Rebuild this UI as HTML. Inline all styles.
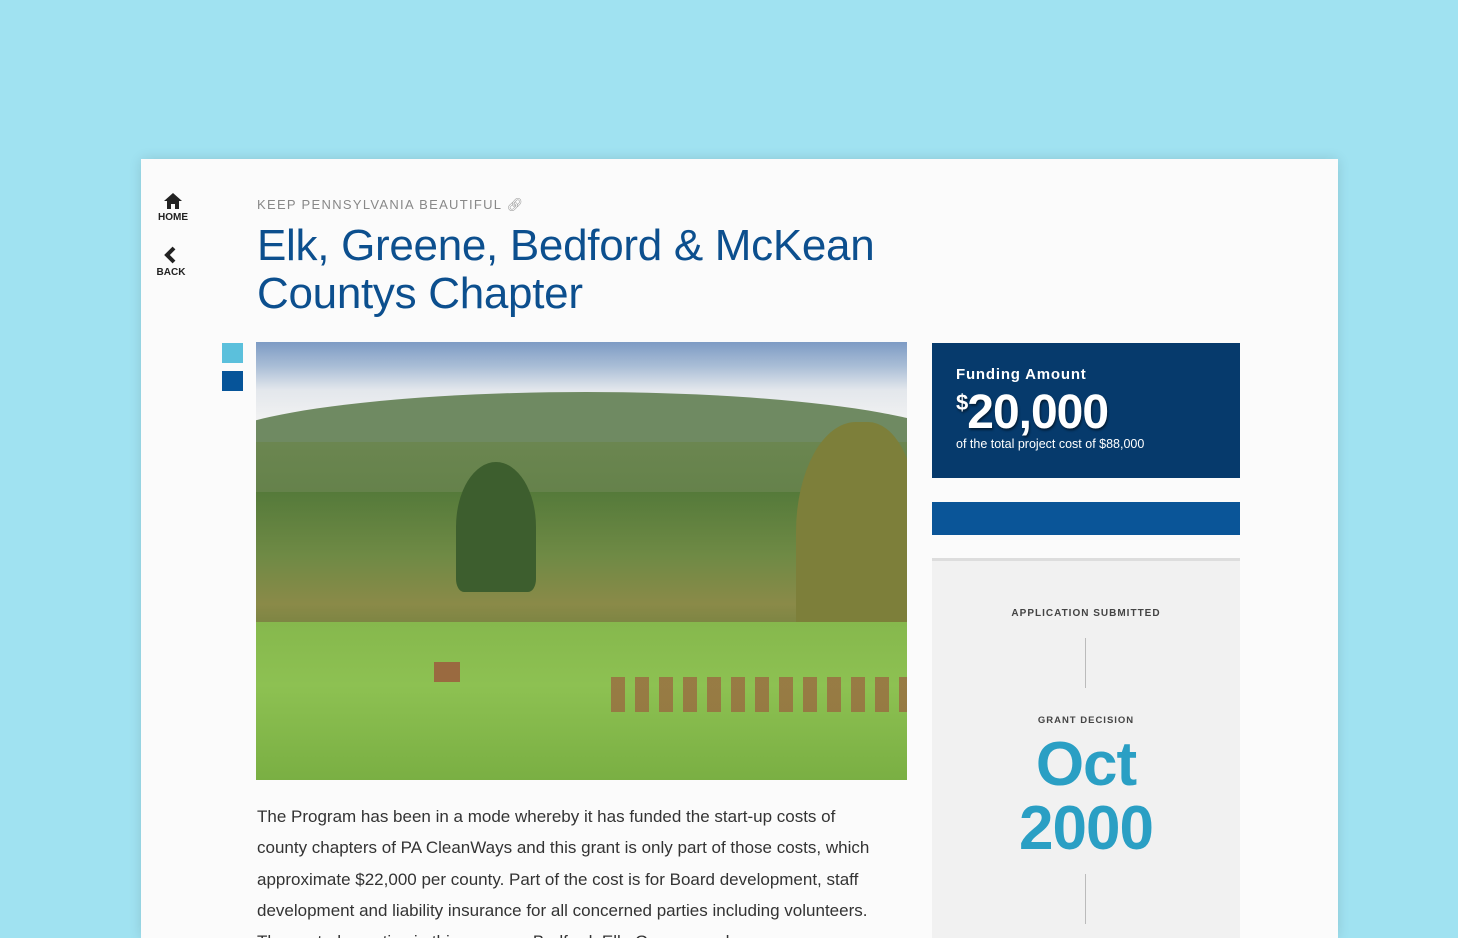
<!DOCTYPE html>
<html style="overflow:hidden"><head><style>
html,body{height:938px}
body{margin:0;width:1458px;height:938px;background:#a0e2f1;overflow:hidden;font-family:"Liberation Sans",sans-serif;position:relative}
.card{position:absolute;left:141px;top:159px;width:1197px;height:779px;background:#fbfbfb;box-shadow:0 0 12px rgba(0,0,0,.12)}
.nav{position:absolute;font-size:10px;font-weight:bold;color:#222;text-align:center;width:40px}
.kicker{position:absolute;left:257px;top:197px;font-size:13px;letter-spacing:1.3px;color:#888}
h1{position:absolute;left:257px;top:222px;margin:0;font-weight:normal;font-size:44px;line-height:48px;color:#0c4f8e;letter-spacing:-.3px}
.sq{position:absolute;left:222px;width:21px;height:20px}
.photo{position:absolute;left:256px;top:342px;width:651px;height:438px;overflow:hidden;background:#7fae45}
.body{position:absolute;left:257px;top:801px;width:625px;font-size:17px;line-height:31.3px;color:#333;height:137px;overflow:hidden}
.fund{position:absolute;left:932px;top:343px;width:308px;height:135px;background:#063a6c;color:#fff}
.bar{position:absolute;left:932px;top:502px;width:308px;height:33px;background:#0a5598}
.tl{position:absolute;left:932px;top:558px;width:308px;height:380px;background:#f1f1f1;border-top:3px solid #ddd;text-align:center;overflow:hidden}
.small{font-size:10px;letter-spacing:1px;color:#444;font-weight:bold}
.vl{position:absolute;left:153px;width:1px;background:#bbb}
</style></head><body>
<div class="card"></div>
<div class="nav" style="left:153px;top:191px"><svg width="20" height="20" viewBox="0 0 20 18"><path d="M10 1 L19 9 H16 V17 H12 V12 H8 V17 H4 V9 H1Z" fill="#222"/></svg><div style="margin-top:-2px">HOME</div></div>
<div class="nav" style="left:151px;top:246px"><svg width="16" height="18" viewBox="0 0 16 18"><path d="M11 2 L4 9 L11 16" stroke="#222" stroke-width="4" fill="none"/></svg><div style="margin-top:0px">BACK</div></div>
<div class="kicker">KEEP PENNSYLVANIA BEAUTIFUL <span style="color:#999">&#128279;&#xFE0E;</span></div>
<h1>Elk, Greene, Bedford &amp; McKean<br>Countys Chapter</h1>
<div class="sq" style="top:343px;background:#5bc0dc"></div>
<div class="sq" style="top:371px;background:#065499"></div>
<div class="photo">
<div style="position:absolute;left:0;top:0;width:651px;height:80px;background:linear-gradient(180deg,#7d9bc4,#a9bdd6 30%,#e3e7ec 60%,#f2f2f2)"></div>
<div style="position:absolute;left:-50px;top:50px;width:760px;height:160px;background:#6f8a62;border-radius:50% 50% 0 0/35% 35% 0 0"></div>
<div style="position:absolute;left:0;top:100px;width:651px;height:110px;background:linear-gradient(180deg,#6b8650,#5e7d45)"></div>
<div style="position:absolute;left:0;top:150px;width:651px;height:160px;background:linear-gradient(180deg,#557a3a,#6f8a45 40%,#8a8a48 70%,#6a7e3c)"></div>
<div style="position:absolute;left:200px;top:120px;width:80px;height:130px;background:#3d5e2e;border-radius:50% 50% 10% 10%"></div>
<div style="position:absolute;left:540px;top:80px;width:120px;height:220px;background:#7d7f3a;border-radius:50% 40% 0 0"></div>
<div style="position:absolute;left:0;top:280px;width:651px;height:158px;background:linear-gradient(180deg,#86b84d,#8dc152 40%,#7aaf43)"></div>
<div style="position:absolute;left:355px;top:335px;width:296px;height:35px;background:repeating-linear-gradient(90deg,#9a6a40 0 14px,transparent 14px 24px);opacity:.8"></div>
<div style="position:absolute;left:178px;top:320px;width:26px;height:20px;background:#9a6a40"></div>
</div>
<div class="body">The Program has been in a mode whereby it has funded the start-up costs of county chapters of PA CleanWays and this grant is only part of those costs, which approximate $22,000 per county. Part of the cost is for Board development, staff development and liability insurance for all concerned parties including volunteers. The vested counties in this case are Bedford, Elk, Greene, and</div>
<div class="fund">
<div style="position:absolute;left:24px;top:23px;font-size:15px;font-weight:bold;letter-spacing:.8px">Funding Amount</div>
<div style="position:absolute;left:24px;top:42px;font-size:48px;font-weight:bold;letter-spacing:-1px;text-shadow:1px 2px 2px rgba(0,0,0,.5)"><span style="font-size:22px;vertical-align:18px">$</span>20,000</div>
<div style="position:absolute;left:24px;top:94px;font-size:12.5px">of the total project cost of $88,000</div>
</div>
<div class="bar"></div>
<div class="tl">
<div class="small" style="position:absolute;top:47px;width:100%">APPLICATION SUBMITTED</div>
<div class="vl" style="top:77px;height:50px"></div>
<div class="small" style="position:absolute;top:154px;width:100%;font-size:9.5px">GRANT DECISION</div>
<div style="position:absolute;top:172px;width:100%;font-size:62px;line-height:64px;font-weight:bold;color:#2a9fc4;letter-spacing:-1px">Oct<br>2000</div>
<div class="vl" style="top:313px;height:50px"></div>
</div>
</body></html>
